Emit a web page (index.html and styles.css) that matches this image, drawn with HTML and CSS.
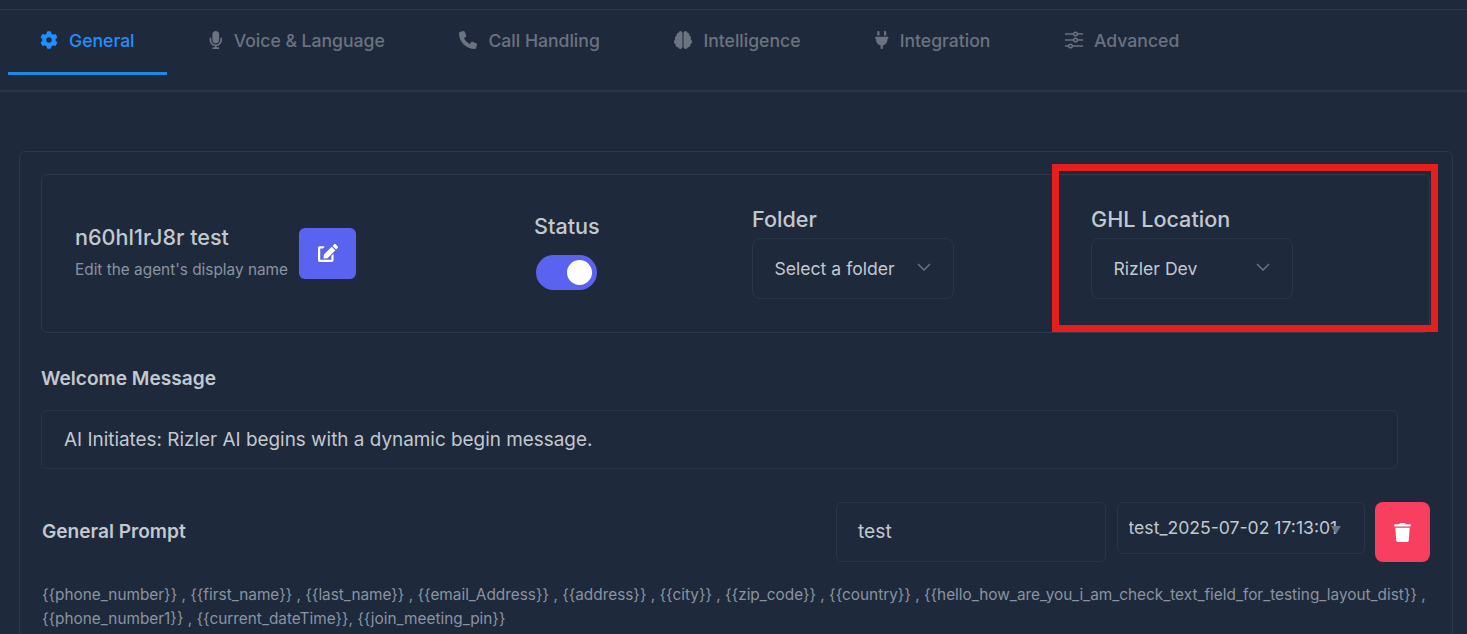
FILE: index.html
```html
<!DOCTYPE html>
<html lang="en">
<head>
<meta charset="utf-8">
<title>Agent settings</title>
<link rel="stylesheet" href="styles.css">
</head>
<body>
<nav class="tabs">
  <a class="tab active"><svg class="ico" viewBox="0 0 512 512"><path d="M487.4 315.7l-42.6-24.6c4.3-23.2 4.3-47 0-70.2l42.6-24.6c4.9-2.8 7.1-8.6 5.5-14-11.1-35.6-30-67.8-54.7-94.6-3.8-4.1-10-5.1-14.8-2.3L380.8 110c-17.9-15.4-38.5-27.3-60.8-35.1V25.8c0-5.6-3.9-10.5-9.4-11.7-36.7-8.2-74.3-7.8-109.2 0-5.5 1.2-9.4 6.1-9.4 11.7V75c-22.2 7.9-42.8 19.8-60.8 35.1L88.7 85.5c-4.9-2.8-11-1.9-14.8 2.3-24.7 26.7-43.6 58.9-54.7 94.6-1.7 5.4.6 11.2 5.5 14L67.3 221c-4.3 23.2-4.3 47 0 70.2l-42.6 24.6c-4.9 2.8-7.1 8.6-5.5 14 11.1 35.6 30 67.8 54.7 94.6 3.8 4.1 10 5.1 14.8 2.3l42.6-24.6c17.9 15.4 38.5 27.3 60.8 35.1v49.2c0 5.6 3.9 10.5 9.4 11.7 36.7 8.2 74.3 7.8 109.2 0 5.5-1.2 9.4-6.1 9.4-11.7v-49.2c22.2-7.9 42.8-19.8 60.8-35.1l42.6 24.6c4.9 2.8 11 1.9 14.8-2.3 24.7-26.7 43.6-58.9 54.7-94.6 1.5-5.5-.7-11.3-5.6-14.1zM256 336c-44.1 0-80-35.9-80-80s35.9-80 80-80 80 35.9 80 80-35.9 80-80 80z"/></svg>General</a>
  <a class="tab"><svg class="ico" viewBox="-16 0 384 512"><path d="M176 352c53.02 0 96-42.98 96-96V96c0-53.02-42.98-96-96-96S80 42.98 80 96v160c0 53.02 42.98 96 96 96zm160-160h-16c-8.84 0-16 7.16-16 16v48c0 74.8-64.49 134.82-140.79 127.38C96.71 376.89 48 317.11 48 250.3V208c0-8.84-7.16-16-16-16H16c-8.84 0-16 7.16-16 16v40.16c0 89.64 63.97 169.55 152 181.69V464H96c-8.84 0-16 7.16-16 16v16c0 8.84 7.16 16 16 16h160c8.84 0 16-7.16 16-16v-16c0-8.84-7.16-16-16-16h-56v-33.77C285.71 418.47 352 344.9 352 256v-48c0-8.84-7.16-16-16-16z"/></svg>Voice &amp; Language</a>
  <a class="tab"><svg class="ico" viewBox="0 0 512 512"><path d="M164.9 24.6c-7.7-18.6-28-28.5-47.4-23.2l-88 24C12.1 30.2 0 46 0 64C0 311.4 200.6 512 448 512c18 0 33.8-12.1 38.6-29.5l24-88c5.3-19.4-4.6-39.7-23.2-47.4l-96-40c-16.3-6.8-35.2-2.1-46.3 11.6L304.7 368C234.3 334.7 177.3 277.7 144 207.3L193.3 167c13.7-11.2 18.4-30 11.6-46.3l-40-96z"/></svg>Call Handling</a>
  <a class="tab"><svg class="ico ico-brain" viewBox="0 0 576 512" preserveAspectRatio="none"><path d="M208 0c-29.9 0-54.7 20.5-61.8 48.2-.8 0-1.4-.2-2.2-.2-35.3 0-64 28.7-64 64 0 4.8.6 9.5 1.7 14C52.5 138 32 166.6 32 200c0 12.6 3.2 24.3 8.3 34.9C16.3 248.7 0 274.3 0 304c0 33.3 20.4 61.9 49.4 73.9-.9 4.6-1.4 9.3-1.4 14.1 0 39.8 32.2 72 72 72 4.1 0 8.1-.5 12-1.2 9.6 28.5 36.2 49.2 68 49.2 39.8 0 72-32.2 72-72V64c0-35.3-28.7-64-64-64zm368 304c0-29.7-16.3-55.3-40.3-69.1 5.2-10.6 8.3-22.3 8.3-34.9 0-33.4-20.5-62-49.7-74 1-4.5 1.7-9.2 1.7-14 0-35.3-28.7-64-64-64-.8 0-1.5.2-2.2.2C422.7 20.5 397.9 0 368 0c-35.3 0-64 28.6-64 64v376c0 39.8 32.2 72 72 72 31.8 0 58.4-20.7 68-49.2 3.9.7 7.9 1.2 12 1.2 39.8 0 72-32.2 72-72 0-4.8-.5-9.5-1.4-14.1 29-12 49.4-40.6 49.4-73.9z"/></svg>Intelligence</a>
  <a class="tab"><svg class="ico" viewBox="0 0 384 512"><path d="M96 0C78.3 0 64 14.3 64 32v96h64V32c0-17.7-14.3-32-32-32zM288 0c-17.7 0-32 14.3-32 32v96h64V32c0-17.7-14.3-32-32-32zM32 160c-17.7 0-32 14.3-32 32s14.3 32 32 32v32c0 77.4 55 142 128 156.8V480c0 17.7 14.3 32 32 32s32-14.3 32-32V412.8C297 398 352 333.4 352 256V224c17.7 0 32-14.3 32-32s-14.3-32-32-32H32z"/></svg>Integration</a>
  <a class="tab"><svg class="ico ico-line" viewBox="0 0 18 18"><path d="M0 3h8.500M12.500 3H18M0 9h8.500M12.500 9H18M0 15h3.500M7.500 15H18"/><circle cx="10.500" cy="3" r="1.800"/><circle cx="10.500" cy="9" r="1.800"/><circle cx="5.500" cy="15" r="1.800"/></svg>Advanced</a>
</nav>

<main class="card">
  <section class="head">
    <div class="name-col">
      <div class="name-text">
        <div class="name">n60hl1rJ8r test</div>
        <div class="hint">Edit the agent's display name</div>
      </div>
      <button class="edit-btn"><svg class="btn-ico" viewBox="0 0 576 512"><path d="M402.6 83.2l90.2 90.2c3.8 3.8 3.8 10 0 13.8L274.4 405.6l-92.8 10.3c-12.4 1.4-22.9-9.1-21.5-21.5l10.3-92.8L388.8 83.2c3.8-3.8 10-3.8 13.8 0zm162-22.9l-48.8-48.8c-15.2-15.2-39.9-15.2-55.2 0l-35.4 35.4c-3.8 3.8-3.8 10 0 13.8l90.2 90.2c3.8 3.8 10 3.8 13.8 0l35.4-35.4c15.2-15.3 15.2-40 0-55.2zM384 346.2V448H64V128h73.1c3.2 0 6.2-1.3 8.5-3.5l40-40c7.6-7.6 2.2-20.5-8.5-20.5H48C21.5 64 0 85.5 0 112v352c0 26.5 21.5 48 48 48h352c26.5 0 48-21.5 48-48V306.2c0-10.7-12.9-16-20.5-8.5l-40 40c-2.2 2.3-3.5 5.3-3.5 8.5z"/></svg></button>
    </div>
    <div class="status-col">
      <div class="field-label">Status</div>
      <div class="toggle"><span class="knob"></span></div>
    </div>
    <div class="field-col">
      <div class="field-label">Folder</div>
      <div class="dropdown">Select a folder<svg class="chev" viewBox="0 0 14 8"><path d="M1 1l6 6 6-6"/></svg></div>
    </div>
    <div class="field-col">
      <div class="field-label">GHL Location</div>
      <div class="dropdown">Rizler Dev<svg class="chev" viewBox="0 0 14 8"><path d="M1 1l6 6 6-6"/></svg></div>
    </div>
  </section>

  <h3 class="section-title welcome-title">Welcome Message</h3>
  <div class="welcome-box">AI Initiates: Rizler AI begins with a dynamic begin message.</div>

  <section class="prompt-row">
    <h3 class="section-title prompt-title">General Prompt</h3>
    <div class="name-input"><span class="nudge">test</span></div>
    <div class="version"><span class="version-text nudge">test_2025-07-02 17:13:01</span><span class="caret"></span></div>
    <button class="delete-btn"><svg class="del-ico" viewBox="0 0 448 512"><path d="M432 32H312l-9.4-18.700A24 24 0 0 0 281.100 0H166.800a23.720 23.720 0 0 0-21.400 13.300L136 32H16A16 16 0 0 0 0 48v32a16 16 0 0 0 16 16h416a16 16 0 0 0 16-16V48a16 16 0 0 0-16-16zM53.200 467a48 48 0 0 0 47.900 45h245.800a48 48 0 0 0 47.900-45L416 128H32z"/></svg></button>
  </section>

  <p class="vars">{{phone_number}} , {{first_name}} , {{last_name}} , {{email_Address}} , {{address}} , {{city}} , {{zip_code}} , {{country}} , {{hello_how_are_you_i_am_check_text_field_for_testing_layout_dist}} , {{phone_number1}} , {{current_dateTime}}, {{join_meeting_pin}}</p>
</main>

<div class="highlight"></div>
</body>
</html>
```

FILE: styles.css
```css
* { box-sizing: border-box; }
html { height: 634px; overflow: hidden; }
body {
  margin: 0;
  padding-top: 9px;
  height: 634px;
  overflow: hidden;
  position: relative;
  background: #1e293b;
  color: #c3c8cf;
  font-family: Inter, "Liberation Sans", sans-serif;
}
.tabs {
  display: flex;
  height: 83px;
  padding: 0 8px;
  gap: 10.6px;
  border-top: 1px solid #2d394b;
  border-bottom: 2px solid #2a3547;
}
.tab {
  display: flex;
  align-items: center;
  gap: 11px;
  height: 65px;
  padding: 0 32px 2px;
  font-size: 17.6px;
  font-weight: 500;
  color: #6b7280;
  border-bottom: 3px solid transparent;
}
.tab.active { color: #1e90ff; border-bottom-color: #1e88e5; }
.ico { height: 18px; width: auto; fill: currentColor; flex: none; }
.ico-brain { width: 18px; }
.ico-line { fill: none; stroke: currentColor; stroke-width: 1.500; }
.card {
  margin: 59px 14px 0 19px;
  height: 600px;
  padding: 22px 22px 0 21px;
  border: 1px solid #2d394b;
  border-radius: 6px;
}
.head {
  display: grid;
  grid-template-columns: 492px 218px 339px 1fr;
  height: 159px;
  border: 1px solid #2d394b;
  border-radius: 6px;
}
.name-col {
  display: flex;
  align-items: center;
  gap: 11px;
  padding-left: 33px;
}
.name { font-size: 21.6px; font-weight: 500; line-height: 24px; }
.hint { font-size: 15.36px; line-height: 20px; margin-top: 11px; margin-bottom: 3px; color: #8a93a0; }
.edit-btn {
  width: 57px;
  height: 51px;
  margin-bottom: 1px;
  border: 0;
  border-radius: 6px;
  background: #5a63f0;
  display: flex;
  align-items: center;
  justify-content: center;
}
.btn-ico { width: 20px; height: 18px; fill: #fff; }
.status-col { padding-top: 38px; }
.field-col { padding-top: 31px; }
.field-label { font-size: 21.6px; font-weight: 500; line-height: 26px; }
.toggle {
  width: 61px;
  height: 35px;
  margin: 16px 0 0 2px;
  border-radius: 18px;
  background: #5a63f0;
  padding: 5px 5px 5px 31px;
}
.knob { display: block; width: 25px; height: 25px; border-radius: 50%; background: #fff; }
.dropdown {
  width: 202px;
  height: 61px;
  margin-top: 6px;
  padding: 0 22px 0 21.5px;
  display: flex;
  align-items: center;
  justify-content: space-between;
  font-size: 17.6px;
  font-weight: 400;
  border: 1px solid #2a3547;
  border-radius: 8px;
}
.chev { width: 14px; height: 8px; margin-bottom: 3px; fill: none; stroke: #6b7280; stroke-width: 1.500; flex: none; }
.section-title { margin: 0; font-size: 19.1px; font-weight: 600; color: #c3c8cf; }
.welcome-title { margin: 33px 0 0; line-height: 24px; }
.welcome-box {
  width: 1357px;
  height: 59px;
  margin-top: 20px;
  padding: 0 22px;
  display: flex;
  align-items: center;
  font-size: 18.9px;
  border: 1px solid #2a3547;
  border-radius: 6px;
}
.prompt-row { display: flex; align-items: flex-start; margin-top: 33px; }
.prompt-title { width: 794px; margin-left: 1px; line-height: 58px; }
.nudge { margin-bottom: 2px; }
.name-input {
  width: 270px;
  height: 60px;
  padding: 0 21px;
  display: flex;
  align-items: center;
  font-size: 19.2px;
  border: 1px solid #2a3547;
  border-radius: 6px;
}
.version {
  position: relative;
  width: 248px;
  height: 52px;
  margin-left: 11px;
  padding: 0 27px 0 10.5px;
  display: flex;
  align-items: center;
  font-size: 17.6px;
  border: 1px solid #2a3547;
  border-radius: 6px;
}
.version-text { white-space: nowrap; overflow: hidden; }
.caret {
  position: absolute;
  right: 23px;
  top: 23px;
  border-left: 5px solid transparent;
  border-right: 5px solid transparent;
  border-top: 8px solid #6b7280;
}
.delete-btn {
  width: 55px;
  height: 60px;
  margin-left: 10px;
  border: 0;
  border-radius: 8px;
  background: #f93f60;
  display: flex;
  align-items: center;
  justify-content: center;
}
.del-ico { width: 17px; height: 19px; fill: #fff; }
.vars {
  margin: 21px 0 0 1px;
  width: 1390px;
  font-size: 15.36px;
  line-height: 24px;
  color: #8a93a0;
}
.highlight {
  position: absolute;
  left: 1052px;
  top: 164px;
  width: 386px;
  height: 168px;
  border: 7px solid #e61e1e;
}
```
